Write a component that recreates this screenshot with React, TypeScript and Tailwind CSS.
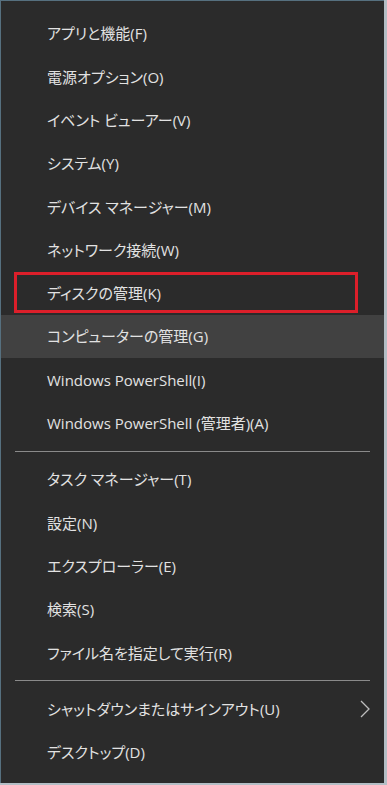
const groups: string[][] = [
  [
    "アプリと機能(F)",
    "電源オプション(O)",
    "イベント ビューアー(V)",
    "システム(Y)",
    "デバイス マネージャー(M)",
    "ネットワーク接続(W)",
    "ディスクの管理(K)",
    "コンピューターの管理(G)",
    "Windows PowerShell(I)",
    "Windows PowerShell (管理者)(A)",
  ],
  ["タスク マネージャー(T)", "設定(N)", "エクスプローラー(E)", "検索(S)", "ファイル名を指定して実行(R)"],
  ["シャットダウンまたはサインアウト(U)", "デスクトップ(D)"],
];

const Item = ({ label, boxed, hover, arrow }: { label: string; boxed?: boolean; hover?: boolean; arrow?: boolean }) => (
  <div className={`relative flex items-center h-[43.3px] pl-[46px] pr-3 ${hover ? "bg-[#414141]" : ""}`}>
    {boxed && <div className="absolute left-[13px] right-[26px] top-0 bottom-[2px] border-[3px] border-[#dc1f2a]" />}
    <span className="flex-1 text-[15px] text-[#e2e2e2] [font-feature-settings:'palt']">{label}</span>
    {arrow && (
      <svg width="12" height="20" viewBox="0 0 12 20" className="mr-[1px]">
        <path d="M2 2 L10 10 L2 18" fill="none" stroke="#bdbdbd" strokeWidth="1.3" />
      </svg>
    )}
  </div>
);

const Separator = () => (
  <div className="flex items-center h-[13px] px-[14px]">
    <div className="w-[358px] h-px bg-[#8a8a8a]" />
  </div>
);

export default function App() {
  return (
    <div
      className="w-[387px] h-[785px] bg-[#b3bec5] overflow-hidden"
      style={{ fontFamily: '"Open Sans", "Noto Sans CJK JP", sans-serif' }}
    >
      <div className="w-[384px] h-[783px] bg-[#2b2b2b] border-t border-l border-[#56707f] pt-[11px]">
        {groups.map((g, gi) => (
          <div key={gi}>
            {gi > 0 && <Separator />}
            {g.map((label) => (
              <Item
                key={label}
                label={label}
                boxed={label.startsWith("ディスク")}
                hover={label.startsWith("コンピューター")}
                arrow={label.startsWith("シャットダウン")}
              />
            ))}
          </div>
        ))}
      </div>
    </div>
  );
}
